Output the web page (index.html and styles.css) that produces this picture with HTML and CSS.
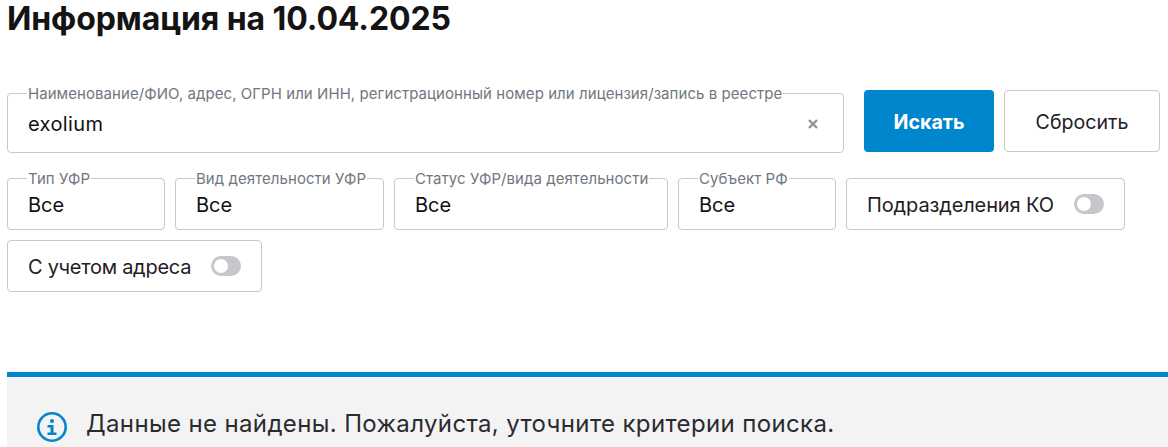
FILE: index.html
```html
<!DOCTYPE html>
<html lang="ru">

<head>
    <meta charset="UTF-8">
    <title>Информация</title>
    <link rel="stylesheet" href="styles.css">
</head>

<body>
    <h1 class="title">Информация на 10.04.2025</h1>

    <form class="search">
        <div class="searchRow">
            <fieldset class="field fieldMain">
                <legend>Наименование/ФИО, адрес, ОГРН или ИНН, регистрационный номер или лицензия/запись в реестре</legend>
                <span class="value valueWide">exolium</span>
                <svg class="clear" width="10" height="10" viewBox="0 0 10 10">
                    <path d="M1 1L9 9M9 1L1 9" stroke="#8f939b" stroke-width="2.4" fill="none" />
                </svg>
            </fieldset>
            <button type="button" class="btn btnBlue">Искать</button>
            <button type="button" class="btn btnWhite">Сбросить</button>
        </div>

        <div class="filters">
            <fieldset class="field filter w158">
                <legend>Тип УФР</legend>
                <span class="value">Все</span>
            </fieldset>
            <fieldset class="field filter w209">
                <legend>Вид деятельности УФР</legend>
                <span class="value">Все</span>
            </fieldset>
            <fieldset class="field filter w274">
                <legend>Статус УФР/вида деятельности</legend>
                <span class="value">Все</span>
            </fieldset>
            <fieldset class="field filter w158">
                <legend>Субъект РФ</legend>
                <span class="value">Все</span>
            </fieldset>
            <div class="toggleBox">
                <span class="toggleText">Подразделения КО</span>
                <span class="toggle"></span>
            </div>
            <div class="toggleBox">
                <span class="toggleText tight">С учетом адреса</span>
                <span class="toggle"></span>
            </div>
        </div>
    </form>

    <div class="notice">
        <svg class="noticeIcon" width="30" height="30" viewBox="0 0 30 30">
            <circle cx="15" cy="15" r="13.7" fill="none" stroke="#0086cc" stroke-width="2.6" />
            <circle cx="15" cy="9" r="2" fill="#0086cc" />
            <path d="M10.5 13H16.5V20.5H19.5V23H10.5V20.5H13.5V15.5H10.5Z" fill="#0086cc" />
        </svg>
        <span>Данные не найдены. Пожалуйста, уточните критерии поиска.</span>
    </div>
</body>

</html>
```

FILE: styles.css
```css
* {
    box-sizing: border-box;
}

html,
body {
    height: 447px;
    overflow: hidden;
}

body {
    margin: 0;
    padding-left: 7px;
    background: #fff;
    color: #1f2024;
    font-family: Inter, "Noto Sans", sans-serif;
}

.title {
    margin: 0;
    height: 85px;
    font-size: 32px;
    line-height: 37px;
    font-weight: 700;
    letter-spacing: -0.1px;
    color: #141414;
}

.search {
    height: 287px;
}

.searchRow {
    display: flex;
    align-items: flex-start;
    width: 1153px;
    height: 85px;
}

.field {
    margin: 0;
    padding: 0 20px 5px;
    border: 1px solid #c6c8cc;
    border-radius: 4px;
    min-inline-size: 0;
    display: flex;
    align-items: center;
}

.field legend {
    height: 16px;
    padding: 0 1px;
    margin-left: -1px;
    font-size: 15px;
    line-height: 18px;
    letter-spacing: 0.06px;
    color: #72767f;
    white-space: nowrap;
}

.fieldMain {
    width: 837px;
    height: 68px;
    margin-right: 20px;
    justify-content: space-between;
}

.value {
    font-size: 20px;
    line-height: 24px;
    color: #111;
}

.valueWide {
    letter-spacing: 0.4px;
}

.clear {
    margin-right: 5px;
}

.btn {
    height: 62px;
    margin-top: 5px;
    padding-top: 2px;
    border-radius: 4px;
    font-family: inherit;
    font-size: 19.6px;
}

.btnBlue {
    width: 130px;
    margin-right: 10px;
    border: 0;
    background: #0086cc;
    color: #fff;
    font-weight: 700;
}

.btnWhite {
    width: 156px;
    border: 1px solid #c6c8cc;
    background: #fff;
    color: #1f2024;
}

.filters {
    display: flex;
    flex-wrap: wrap;
    align-items: flex-end;
    gap: 10px;
    width: 1153px;
}

.filter {
    height: 60px;
}

.w158 {
    width: 158px;
}

.w209 {
    width: 209px;
}

.w274 {
    width: 274px;
}

.toggleBox {
    display: flex;
    align-items: center;
    gap: 20px;
    height: 52px;
    padding: 0 20px;
    border: 1px solid #c6c8cc;
    border-radius: 4px;
    font-size: 20px;
}

.toggleText {
    padding-top: 2px;
    letter-spacing: -0.12px;
}

.tight {
    letter-spacing: -0.27px;
}

.toggle {
    position: relative;
    width: 30px;
    height: 20px;
    border-radius: 10px;
    background: #c5c7cb;
}

.toggle::after {
    content: "";
    position: absolute;
    left: 3px;
    top: 3px;
    width: 14px;
    height: 14px;
    border-radius: 50%;
    background: #fff;
}

.notice {
    display: flex;
    align-items: center;
    gap: 19px;
    height: 75px;
    padding: 22px 0 0 30px;
    border-top: 5px solid #0086cc;
    background: #f3f3f3;
    font-size: 24px;
    letter-spacing: 0.36px;
    color: #2a2b30;
    margin-right: -8px;
}

.noticeIcon {
    margin-top: 8px;
}
```
